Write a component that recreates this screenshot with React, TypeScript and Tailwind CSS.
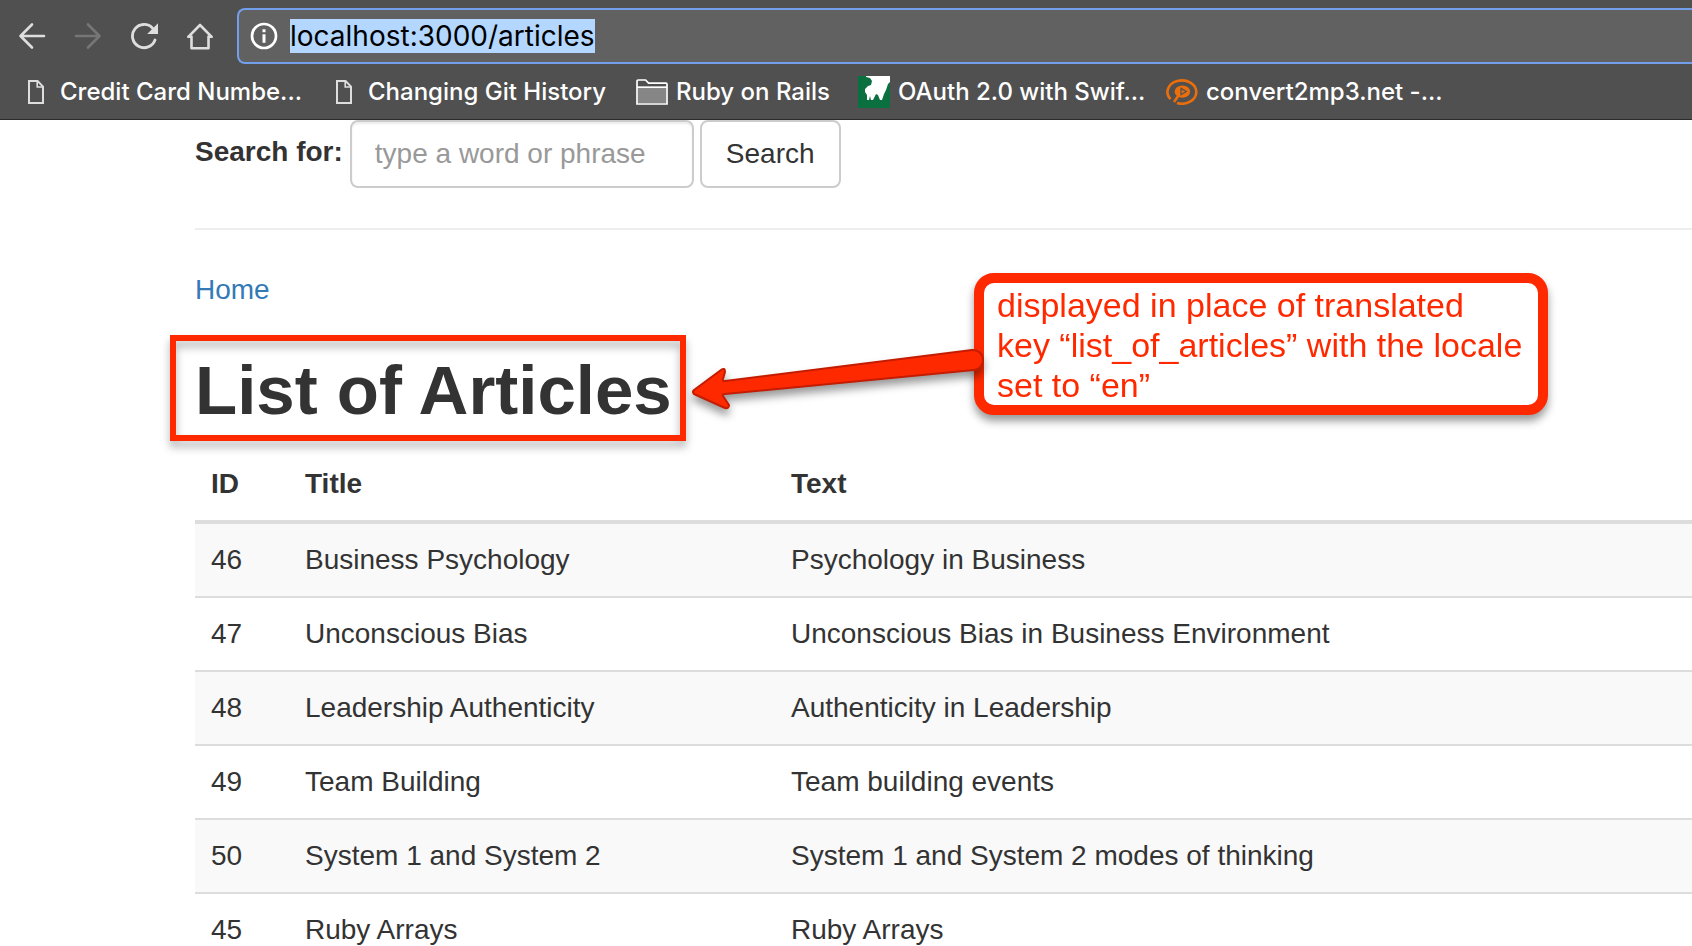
import { useEffect, useRef } from "react";

const articles = [
  { id: 46, title: "Business Psychology", text: "Psychology in Business" },
  { id: 47, title: "Unconscious Bias", text: "Unconscious Bias in Business Environment" },
  { id: 48, title: "Leadership Authenticity", text: "Authenticity in Leadership" },
  { id: 49, title: "Team Building", text: "Team building events" },
  { id: 50, title: "System 1 and System 2", text: "System 1 and System 2 modes of thinking" },
  { id: 45, title: "Ruby Arrays", text: "Ruby Arrays" },
];

function BackIcon() {
  return (
    <svg viewBox="0 0 28 28" className="size-7" fill="none" stroke="currentColor" strokeWidth="2.6" strokeLinecap="round" strokeLinejoin="round">
      <path d="M2.5 14H26M14 2.5 2.5 14 14 25.5" />
    </svg>
  );
}

function ForwardIcon() {
  return (
    <svg viewBox="0 0 28 28" className="size-7" fill="none" stroke="currentColor" strokeWidth="2.6" strokeLinecap="round" strokeLinejoin="round">
      <path d="M2 14H25.5M14 2.5 25.5 14 14 25.5" />
    </svg>
  );
}

function ReloadIcon() {
  return (
    <svg viewBox="0 0 28 28" className="size-7" fill="none">
      <path d="M22.6 6.2A11.6 11.6 0 1 0 25 18" stroke="currentColor" strokeWidth="2.8" strokeLinecap="round" />
      <path d="M28 1.2V12H17.2Z" fill="currentColor" />
    </svg>
  );
}

function HomeIcon() {
  return (
    <svg viewBox="0 0 28 28" className="size-7" fill="none" stroke="currentColor" strokeWidth="2.6" strokeLinecap="round" strokeLinejoin="round">
      <path d="M5.5 14.5V26.2H22.5V14.5M2.3 14.8 14 3 25.7 14.8H22.5M2.3 14.8H5.5" />
    </svg>
  );
}

function InfoIcon() {
  return (
    <svg viewBox="0 0 28 28" className="size-7 shrink-0" fill="none">
      <circle cx="14" cy="14" r="12" stroke="#fff" strokeWidth="2.7" />
      <path d="M12.5 7.3h3v3h-3zM12.5 12.2h3v8.6h-3z" fill="#fff" />
    </svg>
  );
}

function FileIcon() {
  return (
    <svg viewBox="0 0 16 24" className="h-6 w-4 shrink-0" fill="none" stroke="#dedede" strokeWidth="2">
      <path d="M1 1H9.6L15 6.6V23H1Z" />
      <path d="M9.2 1V7H15" strokeWidth="1.6" />
    </svg>
  );
}

function FolderIcon() {
  return (
    <svg viewBox="0 0 32 26" className="h-[26px] w-8 shrink-0">
      <path d="M1 25V2.2Q1 1 2.2 1H9.6L12.6 4.2H30Q31 4.2 31 5.2V25Z" fill="#505050" stroke="#fff" strokeWidth="1.7" />
      <path d="M2 9H30V24H2Z" fill="#868686" />
      <path d="M1 8.2H31" stroke="#fff" strokeWidth="1.7" />
    </svg>
  );
}

function TreeFavicon() {
  return (
    <svg viewBox="0 0 32 32" className="size-8 shrink-0">
      <path d="M0 0H32V32H0Z" fill="#0a7040" />
      <path d="M8 0H32V6L30 8L28 14L26 18L24 24H22L20 19L18 18L15 24H13L12 20L11 24H9L9 19L7 16V13L10 10L13 9L14 5L12 2L8 1Z" fill="#fff" />
    </svg>
  );
}

function ConvertFavicon() {
  return (
    <svg viewBox="0 0 32 26" className="h-[26px] w-8 shrink-0" fill="none">
      <path d="M4.5 20.2A14.4 11.6 0 1 1 11 24" stroke="#ea6f0c" strokeWidth="2.6" />
      <ellipse cx="16.4" cy="12.6" rx="7.8" ry="6.2" fill="#ea6f0c" />
      <path d="M12.5 16.5 8 23" stroke="#ea6f0c" strokeWidth="2.6" />
      <path d="M15 9.4V15.8L20.4 12.6Z" fill="#c9732f" stroke="#5a5048" strokeWidth="1.2" />
    </svg>
  );
}

const bookmarks = [
  { label: "Credit Card Numbe...", icon: <FileIcon />, style: "w-[308px] gap-4" },
  { label: "Changing Git History", icon: <FileIcon />, style: "w-[300px] gap-4" },
  { label: "Ruby on Rails", icon: <FolderIcon />, style: "w-[222px] gap-2" },
  { label: "OAuth 2.0 with Swif...", icon: <TreeFavicon />, style: "w-[308px] gap-2" },
  { label: "convert2mp3.net -...", icon: <ConvertFavicon />, style: "w-[300px] gap-2" },
];

function BrowserBar() {
  const address = useRef<HTMLInputElement>(null);
  useEffect(() => {
    address.current?.focus();
    address.current?.select();
  }, []);

  return (
    <header className="shrink-0 border-b border-[#2b2b2b] bg-[#505050] pt-2 font-['Inter',sans-serif]">
      <div className="flex items-center pl-[18px]">
        <nav aria-label="Browser" className="mr-[23px] flex gap-7 text-[#dedede]">
          <button type="button" aria-label="Back"><BackIcon /></button>
          <button type="button" aria-label="Forward" className="text-[#767676]" disabled><ForwardIcon /></button>
          <button type="button" aria-label="Reload"><ReloadIcon /></button>
          <button type="button" aria-label="Home"><HomeIcon /></button>
        </nav>
        <div className="flex h-14 flex-1 items-center gap-3 rounded-l-lg border-2 border-r-0 border-[#729eeb] bg-[#616161] pl-[11px]">
          <InfoIcon />
          <input
            ref={address}
            aria-label="Address"
            defaultValue="localhost:3000/articles"
            className="h-[34px] flex-1 bg-transparent text-[28px] leading-[34px] font-normal text-black outline-none selection:bg-[#b3d7ff] selection:text-black"
          />
        </div>
      </div>
      <nav aria-label="Bookmarks" className="flex h-[55px] items-center pl-7">
        {bookmarks.map((b) => (
          <a key={b.label} href="#" className={"flex shrink-0 items-center text-[24px] leading-8 font-medium whitespace-nowrap text-white " + b.style}>
            {b.icon}
            {b.label}
          </a>
        ))}
      </nav>
    </header>
  );
}

function Arrow() {
  return (
    <svg viewBox="0 0 300 70" className="absolute top-[224px] left-[492px] h-[70px] w-[300px] overflow-visible drop-shadow-[0_6px_4px_rgba(0,0,0,0.4)]">
      <path
        d="M7 46 Q5 48 7 50 L38 64 Q42 65 42 61 L36 52 Q35 50 38 50 L287 26 A9.5 9.5 0 0 0 285 6 L38 37 Q35 37 36 35 L38 28 Q38 23 34 26 Z"
        fill="#ff2900"
        stroke="#c41c00"
        strokeWidth="2"
        strokeLinejoin="round"
      />
    </svg>
  );
}

export default function App() {
  return (
    <div className="flex h-screen flex-col overflow-hidden bg-white">
      <BrowserBar />
      <main className="relative flex-1 pl-[195px] font-['Liberation_Sans',Arial,sans-serif] text-[28px] leading-10 text-[#333]">
        <form className="flex items-center" onSubmit={(e) => e.preventDefault()}>
          <label htmlFor="search" className="mr-[7px] pb-1 font-bold">Search for:</label>
          <input
            id="search"
            type="text"
            placeholder="type a word or phrase"
            className="mr-[6px] h-[68px] w-[344px] rounded-lg border-2 border-[#ccc] px-[23px] shadow-[inset_0_2px_2px_rgba(0,0,0,0.075)] placeholder:text-[#999]"
          />
          <button type="submit" className="h-[68px] rounded-lg border-2 border-[#ccc] bg-white px-6">Search</button>
        </form>
        <hr className="mt-10 border-t-2 border-[#eee]" />
        <p className="mt-10">
          <a href="#" className="text-[#337ab7]">Home</a>
        </p>
        <div className="relative mt-[42px] mb-[18px] w-fit">
          <h1 className="text-[69px] leading-[78px] font-bold">List of Articles</h1>
          <div className="absolute -top-[17px] -left-[25px] h-[106px] w-[516px] border-6 border-[#ff2900] drop-shadow-[0_6px_4px_rgba(0,0,0,0.3)]" />
        </div>
        <table className="w-full border-separate border-spacing-0 text-left">
          <thead>
            <tr>
              <th className="w-[94px] border-b-4 border-[#ddd] p-4">ID</th>
              <th className="w-[486px] border-b-4 border-[#ddd] p-4">Title</th>
              <th className="border-b-4 border-[#ddd] p-4">Text</th>
            </tr>
          </thead>
          <tbody>
            {articles.map((a) => (
              <tr key={a.id} className="odd:bg-[#f9f9f9]">
                <td className="border-b-2 border-[#ddd] p-4">{a.id}</td>
                <td className="border-b-2 border-[#ddd] p-4">{a.title}</td>
                <td className="border-b-2 border-[#ddd] p-4">{a.text}</td>
              </tr>
            ))}
          </tbody>
        </table>
        <aside className="absolute top-[153px] left-[974px] h-[142px] w-[574px] rounded-[20px] border-10 border-[#ff2900] bg-white pt-[2px] pl-[13px] text-[34px] whitespace-nowrap text-[#ff2900] drop-shadow-[0_6px_4px_rgba(0,0,0,0.4)]">
          displayed in place of translated<br />
          key “list_of_articles” with the locale<br />
          set to “en”
        </aside>
        <div className="absolute top-0 left-[195px]">
          <Arrow />
        </div>
      </main>
    </div>
  );
}
